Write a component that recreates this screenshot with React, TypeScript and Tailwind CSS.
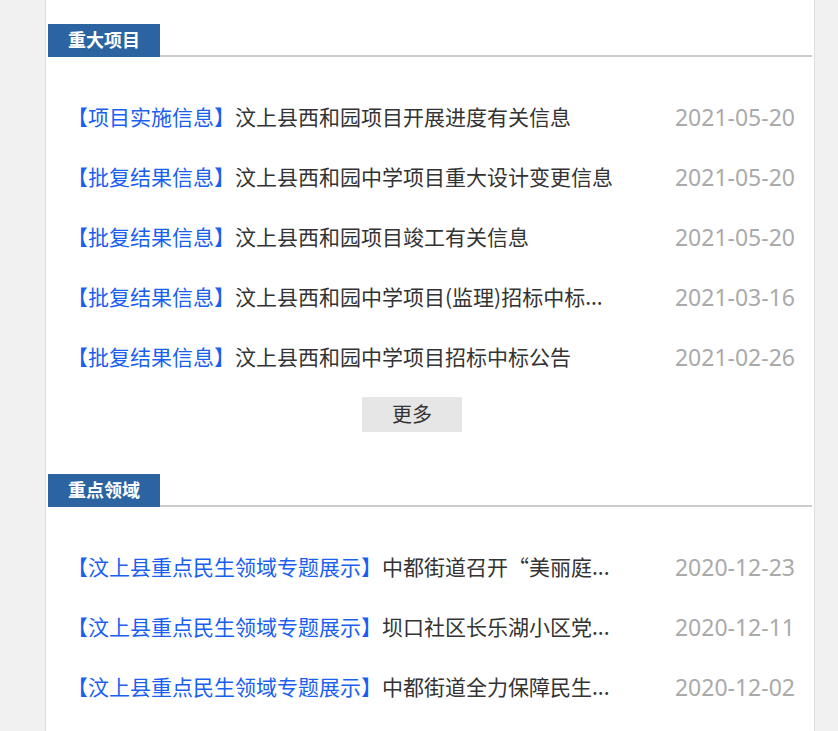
const sections = [
  {
    title: "重大项目",
    more: true,
    items: [
      { tag: "【项目实施信息】", text: "汶上县西和园项目开展进度有关信息", date: "2021-05-20" },
      { tag: "【批复结果信息】", text: "汶上县西和园中学项目重大设计变更信息", date: "2021-05-20" },
      { tag: "【批复结果信息】", text: "汶上县西和园项目竣工有关信息", date: "2021-05-20" },
      { tag: "【批复结果信息】", text: "汶上县西和园中学项目(监理)招标中标...", date: "2021-03-16" },
      { tag: "【批复结果信息】", text: "汶上县西和园中学项目招标中标公告", date: "2021-02-26" },
    ],
  },
  {
    title: "重点领域",
    more: false,
    items: [
      { tag: "【汶上县重点民生领域专题展示】", text: "中都街道召开“美丽庭...", date: "2020-12-23" },
      { tag: "【汶上县重点民生领域专题展示】", text: "坝口社区长乐湖小区党...", date: "2020-12-11" },
      { tag: "【汶上县重点民生领域专题展示】", text: "中都街道全力保障民生...", date: "2020-12-02" },
    ],
  },
];

export default function App() {
  return (
    <div
      className="min-h-[731px] bg-[#f1f1f1] pl-[45px] pr-[23px]"
      style={{ fontFamily: '"Noto Sans", "Noto Sans CJK SC", sans-serif' }}
    >
      <div className="min-h-[731px] bg-white border-x border-[#dcdcdc] px-[2px] pt-[24px]">
        {sections.map((s, i) => (
          <section key={s.title} className={i > 0 ? "mt-[42px]" : ""}>
            <div className="flex items-end border-b-2 border-[#cccccc]">
              <h3 className="w-[112px] h-[33px] -mb-[2px] bg-[#2c64a2] text-white text-[18px] font-bold flex items-center justify-center">
                {s.title}
              </h3>
            </div>
            <ul className="pt-[30px] pl-[19px] pr-[17px]">
              {s.items.map((it, j) => (
                <li key={j} className="h-[60px] flex items-center justify-between text-[21px]">
                  <span className="whitespace-nowrap font-['Noto_Sans_CJK_SC',sans-serif]">
                    <span className="text-[#1a5ff0]">{it.tag}</span>
                    <span className="text-[#333333]">{it.text}</span>
                  </span>
                  <span className="text-[#aaaaaa] text-[23px]">{it.date}</span>
                </li>
              ))}
            </ul>
            {s.more && (
              <div className="flex justify-center mt-[10px] pr-[36px]">
                <button className="w-[100px] h-[35px] bg-[#e6e6e6] text-[#333333] text-[20px]">更多</button>
              </div>
            )}
          </section>
        ))}
      </div>
    </div>
  );
}
